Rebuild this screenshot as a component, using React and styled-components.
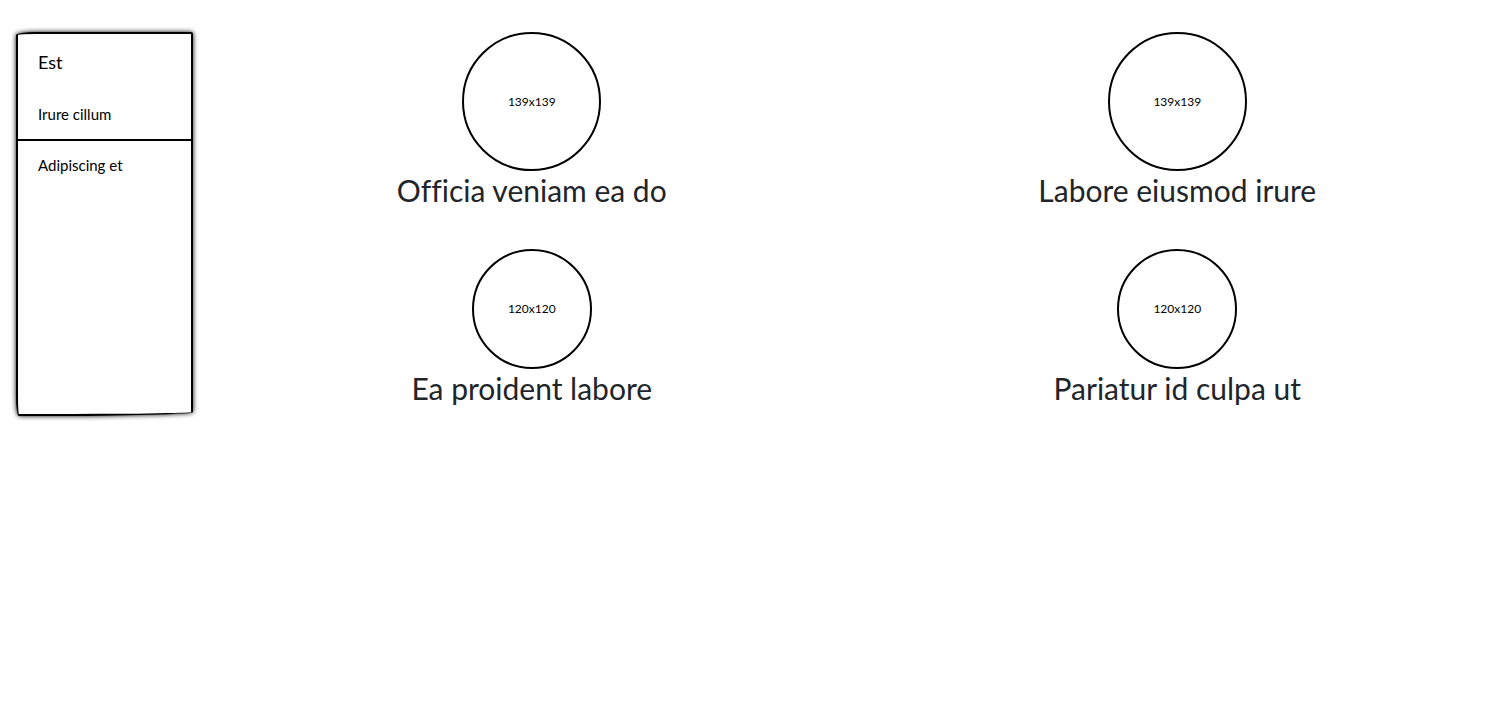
import React from 'react';
import styled, { createGlobalStyle } from 'styled-components';

const GlobalStyle = createGlobalStyle`
  *, *::before, *::after { box-sizing: border-box; }
  body {
    margin: 0;
    background: #fff;
    color: #212529;
    font-family: Lato, "Open Sans", sans-serif;
  }
`;

const Layout = styled.div`
  display: flex;
  align-items: flex-start;
`;

const Sidebar = styled.nav`
  flex: none;
  width: 177px;
  min-height: 384px;
  margin: 32px 16px;
  border: 2px solid #000;
  border-radius: 20px 2px 150px 3px / 3px 2px 4px 20px;
  background: #fefefe;
  box-shadow: 0 0 5px #000;
  color: #000;
`;

const SidebarTitle = styled.h2`
  margin: 0;
  padding: 0 20px;
  font-size: 18px;
  font-weight: 400;
  line-height: 56px;
`;

const Menu = styled.ul`
  margin: 0;
  padding: 0;
  list-style: none;
`;

const MenuItem = styled.li`
  & + & { border-top: 2px solid #000; }
`;

const MenuLink = styled.a`
  display: block;
  padding: 0 20px;
  color: inherit;
  font-size: 15px;
  line-height: 49px;
  text-decoration: none;
`;

const Gallery = styled.main`
  flex: 1;
  display: grid;
  grid-template-columns: repeat(2, minmax(0, 1fr));
`;

const Card = styled.article`
  display: flex;
  flex-direction: column;
  align-items: center;
  padding: 32px 0 8px;
`;

const Placeholder = styled.div`
  display: flex;
  align-items: center;
  justify-content: center;
  width: ${(p) => p.$size}px;
  height: ${(p) => p.$size}px;
  border: 2px solid #000;
  border-radius: 50%;
  color: #000;
  font-size: 12px;
  line-height: 16px;
`;

const CardTitle = styled.h3`
  margin: 0;
  font-size: 30px;
  font-weight: 400;
  font-variant-ligatures: none;
  line-height: 38px;
  text-align: center;
`;

const links = ['Irure cillum', 'Adipiscing et'];

const cards = [
  { title: 'Officia veniam ea do', size: 139 },
  { title: 'Labore eiusmod irure', size: 139 },
  { title: 'Ea proident labore', size: 120 },
  { title: 'Pariatur id culpa ut', size: 120 },
];

export default function App() {
  return (
    <>
      <GlobalStyle />
      <Layout>
        <Sidebar>
          <SidebarTitle>Est</SidebarTitle>
          <Menu>
            {links.map((label) => (
              <MenuItem key={label}>
                <MenuLink href="#">{label}</MenuLink>
              </MenuItem>
            ))}
          </Menu>
        </Sidebar>
        <Gallery>
          {cards.map(({ title, size }) => (
            <Card key={title}>
              <Placeholder $size={size}>{`${size}x${size}`}</Placeholder>
              <CardTitle>{title}</CardTitle>
            </Card>
          ))}
        </Gallery>
      </Layout>
    </>
  );
}
